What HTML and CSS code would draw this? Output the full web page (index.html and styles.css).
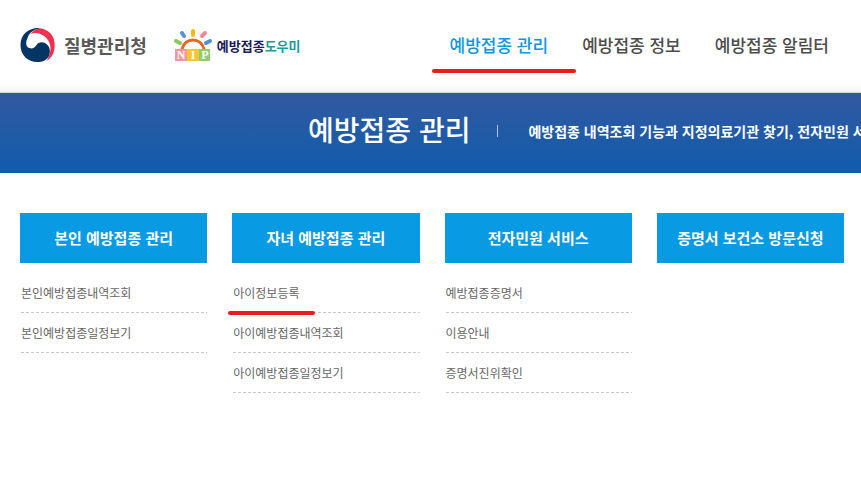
FILE: index.html
```html
<!DOCTYPE html>
<html lang="ko">
<head>
<meta charset="utf-8">
<title>예방접종 관리</title>
<link rel="stylesheet" href="styles.css">
</head>
<body>
<header class="header">
  <div class="logos">
    <a class="logo" href="#">
      <svg class="emblem" viewBox="0 0 35 34" aria-hidden="true">
        <path fill="#f0304c" d="M10 6C14 1 20-1 25 2C32 5 35 12 34 19C34 25 31 30 26 33C30 27 31 20 29 15C26 8 18 3 10 6Z"/>
        <path fill="#053562" d="M21 0C13-1 0 3 0 17C0 27 7 34 17 34C22 34 26 32 28 29C30 25 30 20 27 17C23 13 18 14 16 17C14 20 12 21 9 20C5 19 5 14 7 10C9 4 14 1 21 0Z"/>
      </svg>
      <span class="agency">질병관리청</span>
    </a>
    <a class="logo" href="#">
      <svg class="sun" viewBox="0 0 40 34" aria-hidden="true">
        <g fill="none" stroke-width="4" stroke-linecap="round">
          <path stroke="#8cc95b" d="M3 13l4 2"/>
          <path stroke="#5a91cd" d="M9 5l2 3"/>
          <path stroke="#fbb71b" d="M20 3v4"/>
          <path stroke="#f28b98" d="M32 5l-3 3"/>
          <path stroke="#4a92d2" d="M37 13l-4 2"/>
          <path stroke="#e9641e" stroke-width="3" d="M9 21C12 9 28 9 31 21"/>
        </g>
        <path fill="#f495a4" d="M2 21h12v12H2z"/>
        <path fill="#fbc52c" d="M14 21h12v12H14z"/>
        <path fill="#91ce6b" d="M26 21h11v12H26z"/>
        <g class="sun-letters"><text x="8" y="31">N</text><text x="20" y="31">I</text><text x="32" y="31">P</text></g>
      </svg>
      <span class="helper">예방접종<span class="helper-accent">도우미</span></span>
    </a>
  </div>
  <nav class="nav">
    <a class="nav-link is-active" href="#">예방접종 관리</a>
    <a class="nav-link" href="#">예방접종 정보</a>
    <a class="nav-link" href="#">예방접종 알림터</a>
  </nav>
</header>
<section class="banner">
  <h1 class="banner-title">예방접종 관리</h1>
  <p class="banner-text">예방접종 내역조회 기능과 지정의료기관 찾기, 전자민원 서비스</p>
</section>
<main class="menu">
  <section class="column">
    <h2 class="column-title">본인 예방접종 관리</h2>
    <ul class="list">
      <li><a href="#">본인예방접종내역조회</a></li>
      <li><a href="#">본인예방접종일정보기</a></li>
    </ul>
  </section>
  <section class="column">
    <h2 class="column-title">자녀 예방접종 관리</h2>
    <ul class="list">
      <li class="is-marked"><a href="#">아이정보등록</a></li>
      <li><a href="#">아이예방접종내역조회</a></li>
      <li><a href="#">아이예방접종일정보기</a></li>
    </ul>
  </section>
  <section class="column">
    <h2 class="column-title">전자민원 서비스</h2>
    <ul class="list">
      <li><a href="#">예방접종증명서</a></li>
      <li><a href="#">이용안내</a></li>
      <li><a href="#">증명서진위확인</a></li>
    </ul>
  </section>
  <section class="column">
    <h2 class="column-title">증명서 보건소 방문신청</h2>
  </section>
</main>
</body>
</html>
```

FILE: styles.css
```css
* {
  box-sizing: border-box;
}

body {
  margin: 0;
  background: #fff;
  color: #666;
  font-family: "Noto Sans CJK KR", "Noto Sans", sans-serif;
  overflow-x: hidden;
}

h1, h2, p, ul {
  margin: 0;
  padding: 0;
}

a {
  color: inherit;
  text-decoration: none;
}

.header {
  display: flex;
  justify-content: space-between;
  align-items: center;
  height: 93px;
  padding: 0 32px 2px 20px;
  border-bottom: 1px solid #d5d5d5;
  background: linear-gradient(#fff 84px, #f3f3f3 92px);
  white-space: nowrap;
}

.logos {
  display: flex;
  gap: 26px;
}

.logo {
  display: flex;
  align-items: center;
}

.emblem {
  width: 36px;
  height: 34px;
  margin-right: 8px;
}

.sun {
  width: 40px;
  height: 34px;
  margin-right: 4px;
}

.sun-letters {
  fill: #fff;
  font: bold 12px "Liberation Serif", serif;
  text-anchor: middle;
}

.agency {
  color: #595757;
  font-size: 18px;
  font-weight: 700;
}

.helper {
  color: #1d1b5c;
  font-size: 13px;
  font-weight: 700;
}

.helper-accent {
  color: #1d9a98;
}

.nav {
  display: flex;
  gap: 34px;
}

.nav-link {
  position: relative;
  color: #4c4c4c;
  font-size: 17px;
  font-weight: 500;
  line-height: 24px;
}

.nav-link.is-active {
  color: #0d96e2;
}

.nav-link.is-active::after {
  content: "";
  position: absolute;
  left: -18px;
  right: -28px;
  top: 36px;
  height: 4px;
  border-radius: 2px;
  background: #e81c1e;
}

.banner {
  display: flex;
  align-items: center;
  height: 80px;
  padding: 0 0 4px 308px;
  overflow: hidden;
  background: linear-gradient(#3459a1, #0f5cab);
  color: #fff;
  white-space: nowrap;
}

.banner-title {
  padding-bottom: 4px;
  font-size: 28px;
  font-weight: 500;
  line-height: 40px;
}

.banner-text {
  display: flex;
  align-items: center;
  font-size: 14px;
  font-weight: 700;
}

.banner-text::before {
  content: "";
  width: 1px;
  height: 12px;
  margin: 0 30px 0 27px;
  background: #a9c5e6;
}

.menu {
  display: grid;
  grid-template-columns: repeat(4, minmax(0, 1fr));
  gap: 25px;
  padding: 40px 17px 40px 20px;
}

.column-title {
  background: #089ae2;
  color: #fff;
  font-size: 15px;
  font-weight: 700;
  line-height: 50px;
  text-align: center;
  white-space: nowrap;
}

.list {
  padding: 10px 0 0 1px;
  list-style: none;
}

.list li {
  position: relative;
  height: 40px;
  background: repeating-linear-gradient(90deg, #c8c8c8 0 3px, transparent 3px 5px) bottom / 100% 1px no-repeat;
  font-size: 12px;
  line-height: 40px;
  white-space: nowrap;
}

.list .is-marked::after {
  content: "";
  position: absolute;
  left: -5px;
  bottom: -2px;
  width: 87px;
  height: 4px;
  border-radius: 2px;
  background: #e81c1e;
}
```
